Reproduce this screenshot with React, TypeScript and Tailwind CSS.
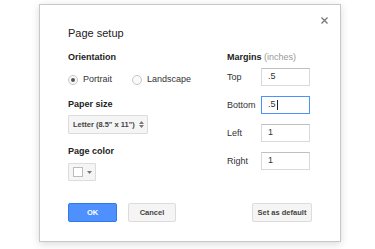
import React from "react";

const Radio = ({ checked, label }: { checked?: boolean; label: string }) => (
  <label className="flex h-[11px] items-center gap-[5px]">
    <span className="flex h-[10px] w-[10px] items-center justify-center rounded-full border border-[#c6c6c6] bg-[#fafafa]">
      {checked && <span className="h-[4px] w-[4px] rounded-full bg-[#555]" />}
    </span>
    <span className="text-[9px] leading-[11px] text-[#333]">{label}</span>
  </label>
);

const MarginRow = ({
  label,
  value,
  focused,
}: {
  label: string;
  value: string;
  focused?: boolean;
}) => (
  <div className="flex items-center">
    <span className="w-[34px] text-[9px] leading-[11px] text-[#333]">{label}</span>
    <div
      className={`flex h-[18px] w-[49px] items-center border pl-[6px] text-[9px] text-[#333] ${
        focused ? "border-[#4d90fe]" : "border-[#d9d9d9] border-t-[#c0c0c0]"
      }`}
    >
      {value}
      {focused && <span className="ml-px h-[10px] w-px bg-[#222]" />}
    </div>
  </div>
);

export default function App() {
  return (
    <div className="h-[249px] w-[375px] bg-white pl-[39px] pt-[4px] font-['Liberation_Sans',Arial,sans-serif]">
      <div className="relative h-[238px] w-[302px] border border-[#c8c8c8] bg-white px-[28px] pt-[22px] shadow-[0_2px_8px_rgba(0,0,0,0.15)]">
        <button className="absolute right-[12px] top-[12px]">
          <svg width="7" height="7" viewBox="0 0 7 7">
            <path d="M0.5 0.5L6.5 6.5M6.5 0.5L0.5 6.5" stroke="#777" strokeWidth="1.3" />
          </svg>
        </button>

        <h2 className="text-[11px] leading-[13px] text-[#222]">Page setup</h2>

        <div className="mt-[12px] flex">
          <div className="flex w-[159px] flex-col">
            <div className="text-[9px] font-bold leading-[11px] text-[#222]">Orientation</div>
            <div className="mt-[11px] flex gap-[20px]">
              <Radio checked label="Portrait" />
              <Radio label="Landscape" />
            </div>

            <div className="mt-[14px] text-[9px] font-bold leading-[11px] text-[#222]">Paper size</div>
            <div className="mt-[5px] flex h-[19px] w-[80px] items-center justify-between rounded-[1px] border border-[#dcdcdc] bg-[#f5f5f5] pl-[4px] pr-[3px]">
              <span className="text-[7.5px] font-bold text-[#444]">Letter (8.5" x 11")</span>
              <svg width="5" height="7" viewBox="0 0 5 7">
                <path d="M0 3L2.5 0L5 3Z M0 4L2.5 7L5 4Z" fill="#777" />
              </svg>
            </div>

            <div className="mt-[12px] text-[9px] font-bold leading-[11px] text-[#222]">Page color</div>
            <div className="mt-[6px] flex h-[18px] w-[28px] items-center gap-[4px] rounded-[1px] border border-[#dcdcdc] bg-[#f5f5f5] pl-[4px]">
              <span className="h-[10px] w-[10px] border border-[#bbb] bg-white" />
              <svg width="5" height="3" viewBox="0 0 5 3">
                <path d="M0 0L5 0L2.5 3Z" fill="#777" />
              </svg>
            </div>
          </div>

          <div className="flex flex-col">
            <div className="text-[9px] leading-[11px]">
              <span className="font-bold text-[#222]">Margins</span>{" "}
              <span className="text-[#999]">(inches)</span>
            </div>
            <div className="mt-[5px] flex flex-col gap-[10px]">
              <MarginRow label="Top" value=".5" />
              <MarginRow label="Bottom" value=".5" focused />
              <MarginRow label="Left" value="1" />
              <MarginRow label="Right" value="1" />
            </div>
          </div>
        </div>

        <div className="mt-[22px] flex justify-between">
          <div className="flex gap-[11px]">
            <button className="h-[19px] w-[49px] rounded-[2px] border border-[#3079ed] bg-[#4d90fe] text-[7.5px] font-bold text-white">
              OK
            </button>
            <button className="h-[19px] w-[48px] rounded-[2px] border border-[#dcdcdc] bg-[#f5f5f5] text-[7.5px] font-bold text-[#444]">
              Cancel
            </button>
          </div>
          <button className="h-[19px] w-[60px] rounded-[2px] border border-[#dcdcdc] bg-[#f5f5f5] text-[7.5px] font-bold text-[#444]">
            Set as default
          </button>
        </div>
      </div>
    </div>
  );
}
